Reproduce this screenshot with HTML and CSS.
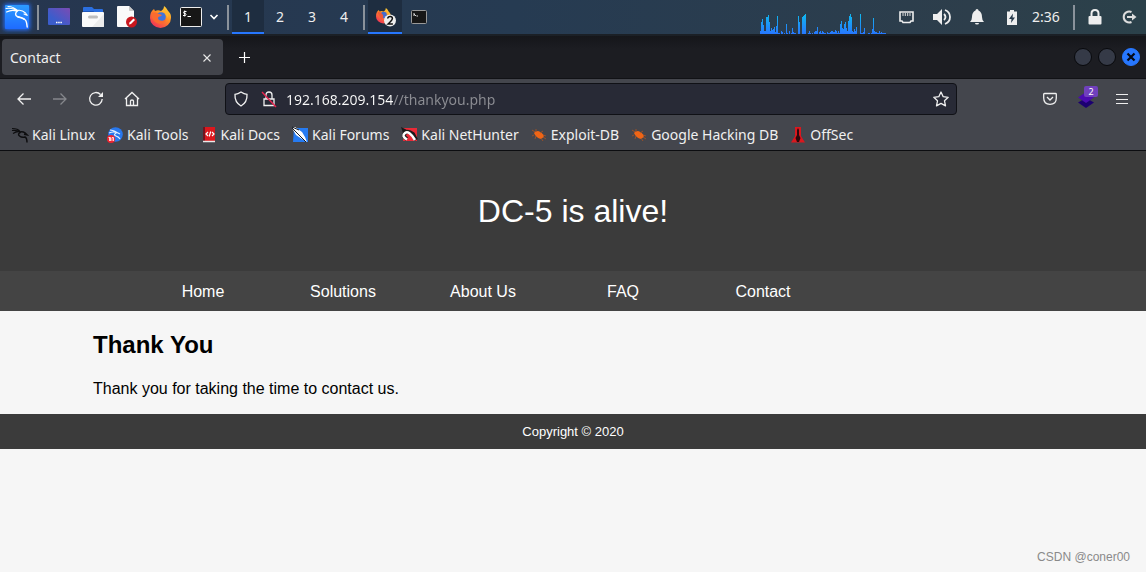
FILE: index.html
```html
<!DOCTYPE html>
<html lang="en">
<head>
<meta charset="utf-8">
<meta name="viewport" content="width=device-width, initial-scale=1">
<title>Contact</title>
<link rel="stylesheet" href="styles.css">
</head>
<body>
<div class="panel">
  <button class="cell" aria-label="Applications"><svg width="34" height="34" viewBox="0 0 34 34"><defs><linearGradient id="kg" x1="0" y1="0" x2="0" y2="1"><stop offset="0" stop-color="#2c9bff"/><stop offset="1" stop-color="#1e6bff"/></linearGradient><filter id="glow" x="-30%" y="-30%" width="160%" height="160%"><feGaussianBlur stdDeviation="2"/></filter></defs><rect x="4" y="4" width="26" height="26" rx="2" fill="#2470ff" filter="url(#glow)"/><rect x="5" y="5" width="24" height="24" rx="1" fill="url(#kg)"/><g fill="none" stroke="#fff" stroke-linecap="round"><path d="M8 6.500c4 .2 7 1.500 9.500 4M6 8.500c4-.5 8 .2 11 2M6.500 12c3-1.500 7-2 10-1" stroke-width="1.100"/><path d="M17 10.500c3-.8 6 0 8.500 2.500l2 2.500-3.500-1.500" stroke-width="1.100"/><path d="M18 10.500c-3 2-3.500 5 0 6.500 3 1 6.500 1 8 4 .9 2 1 4 1.200 6" stroke-width="1.400"/><path d="M24 19c-2-1.500-4-2-6-2.300" stroke-width="1.600"/></g></svg></button>
  <span class="sep"></span>
  <button class="cell" aria-label="Show desktop"><svg width="22" height="18" viewBox="0 0 22 18"><defs><linearGradient id="dg" x1="0" y1="1" x2="1" y2="0"><stop offset=".3" stop-color="#3b5dcc"/><stop offset="1" stop-color="#7b4bb3"/></linearGradient></defs><rect width="22" height="17" rx="1" fill="url(#dg)"/><path d="M8 14.500h1.500m.7 0h1.500m.7 0h1.500" stroke="#fff" stroke-width="1.500"/></svg></button>
  <button class="cell" aria-label="Files"><svg width="22" height="20" viewBox="0 0 22 20"><path d="M1 1q0-1 1-1h8l2 2h8q1 0 1 1v5H1z" fill="#2b6fe0"/><path d="M1 4h11l-1 2H1z" fill="#1e55b8"/><rect y="5" width="22" height="15" rx="1" fill="#fafafa"/><path d="M22 7v12q0 1-1 1H10z" fill="#ececec"/><rect x="6" y="8.500" width="10" height="3" rx="1.500" fill="#bdbdbd"/></svg></button>
  <button class="cell" aria-label="Text editor"><svg width="20" height="22" viewBox="0 0 20 22"><path d="M0 1q0-1 1-1h11l5 5v15q0 1-1 1H1q-1 0-1-1z" fill="#fafafa"/><path d="M12 0v4q0 1 1 1h4z" fill="#c9c9c9"/><circle cx="14.500" cy="16" r="5.500" fill="#c9171e"/><path d="m12 18.500.5-2 4-4 1.500 1.500-4 4z" fill="#fff"/></svg></button>
  <button class="cell" aria-label="Firefox"><svg width="22" height="22" viewBox="0 0 22 22"><defs><linearGradient id="ff" x1=".9" y1="0" x2=".2" y2="1"><stop offset="0" stop-color="#ffe03b"/><stop offset=".45" stop-color="#ff8d23"/><stop offset="1" stop-color="#f02c5c"/></linearGradient></defs><path id="fox" d="M14 0c3 2 3 4 5 6s2 4 2 6a10 9.500 0 0 1-21 0c0-4 1-7 4-9l1 2c2-1 4-1 6 0 2-1 3-3 3-5z" fill="url(#ff)"/><circle cx="11" cy="11" r="4.800" fill="#3f74dc"/><path d="M2 7c3-1 5 0 7 1l3 1c-1 2-4 1-4 3 0 3 5 4 8 1-1 4-5 6-9 4s-6-6-5-10z" fill="#fa6b30"/><path d="M10 7c2-2 5-2 6 2l2 3c1-5-2-7-4-9z" fill="#ffb52d"/></svg></button>
  <button class="cell terminal" aria-label="Terminal"><svg width="22" height="20" viewBox="0 0 22 20"><rect x=".5" y=".5" width="21" height="19" rx="1" fill="#171717" stroke="#eee"/><path d="M6.500 4.500H4q-1 1 0 2h1.500q1 1 0 2H3M4.700 3.500v6M7.500 9.500H11" fill="none" stroke="#fff"/></svg></button>
  <button class="cell more" aria-label="More terminals"><svg width="10" height="8" viewBox="0 0 10 8"><path d="m1.500 2 3.500 3.500L8.500 2" fill="none" stroke="#fff" stroke-width="1.600"/></svg></button>
  <span class="sep"></span>
  <button class="space current">1</button><button class="space">2</button><button class="space">3</button><button class="space">4</button>
  <span class="sep"></span>
  <button class="cell current" aria-label="Firefox windows"><svg width="16" height="22" viewBox="0 0 16 22"><g transform="translate(-1 2) scale(.7)"><use href="#fox"/><circle cx="11" cy="10" r="4.500" fill="#456bcb"/><path d="M2 6c5-1 7 3 8 4s0 5-2 7z" fill="#f05a35"/></g><circle cx="13" cy="14.500" r="6" fill="#eee"/><path d="M10.700 12.500q.3-2 2.500-2t2.200 2q0 1.500-4.300 5.500h4.800" fill="none" stroke="#111" stroke-width="1.500"/></svg></button>
  <button class="cell" aria-label="Terminal window"><svg width="16" height="14" viewBox="0 0 16 14"><rect x=".5" y=".5" width="15" height="13" rx="1" fill="#171717" stroke="#999"/><path d="M3 3v3m0-2 2 2m.5 0H7" fill="none" stroke="#ddd"/></svg></button>
  <svg class="graph" width="126" height="20" viewBox="0 0 126 20" shape-rendering="crispEdges"><defs><linearGradient id="cpu" gradientUnits="userSpaceOnUse" x1="0" y1="0" x2="0" y2="20"><stop offset="0" stop-color="#10b9ee"/><stop offset="1" stop-color="#2777ff"/></linearGradient></defs><path fill="url(#cpu)" d="M0 20V17h1V8h1V5h1V11h1V17h2V3h2V1h1V8h1V17h1V14h1V16h1V15h1V13h1V18h1V12h1V2h1V19h2V20h1V17h1V18h1V20h1V19h1V20h1V10h1V19h1V20h1V17h1V20h1V19h1V14h1V18h1V19h2V20h2V2h1V8h1V20h2V3h1V2h1V1h1V0h1V20h2V19h1V17h1V19h1V20h1V19h1V20h1V18h1V17h2V13h1V20h1V18h1V17h1V19h1V17h1V18h1V19h2V20h1V18h1V19h2V18h1V17h2V18h2V16h1V17h1V19h1V17h1V19h1V10h1V7h1V14h1V15h1V10h1V8h1V14h1V17h1V7h1V2h1V0h1V3h1V17h1V18h1V15h1V17h1V13h1V20h3V0h1V19h2V18h1V14h1V20h3V19h2V20h1V19h1V15h1V4h1V17h1V18h2V19h2V17h1V19h1V18h1V19h4V20z"/></svg>
  <button class="tray" aria-label="Network"><svg width="15" height="13" viewBox="0 0 15 13"><path d="M1 1h13v9h-2l-1 1.500H4L3 10H1z" fill="none" stroke="#eee" stroke-width="1.600"/><path d="M4 2v3m2.300-3v3m2.400-3v3M11 2v3" stroke="#ddd"/></svg></button>
  <button class="tray" aria-label="Volume"><svg width="18" height="18" viewBox="0 0 18 18"><path d="M0 6h4l5-5v16l-5-5H0z" fill="#eee"/><path d="M11 6q3 3 0 6M12 2q5 2 5 7t-5 7" fill="none" stroke="#eee" stroke-width="1.800"/></svg></button>
  <button class="tray" aria-label="Notifications"><svg width="14" height="16" viewBox="0 0 14 16"><path d="M7 0q1.500 0 1.500 1.500Q12 3 12 8q0 3 2 5H0q2-2 2-5 0-5 3.500-6.500Q5.500 0 7 0zM5 14h4q0 1.500-2 1.500T5 14z" fill="#eee"/></svg></button>
  <button class="tray" aria-label="Battery"><svg width="10" height="15" viewBox="0 0 10 15"><path d="M3 0h4v1.500h3V15H0V1.500h3z" fill="#eee"/><path d="M6 3.500 2 9h2.500L4 13l4-5.500H5.500z" fill="#293b4c"/></svg></button>
  <time class="clock">2:36</time>
  <span class="sep"></span>
  <button class="cell" aria-label="Lock screen"><svg width="14" height="16" viewBox="0 0 14 16"><rect x=".5" y="7" width="13" height="8.500" rx="1" fill="#eee"/><path d="M3.500 7V4.500q0-3.500 3.500-3.500t3.500 3.500V7" fill="none" stroke="#eee" stroke-width="2"/></svg></button>
  <button class="cell" aria-label="Log out"><svg width="16" height="14" viewBox="0 0 16 14"><path d="M10.500 2A5.500 5.500 0 1 0 10.500 12M6 7h7" fill="none" stroke="#ddd" stroke-width="2"/><path d="m11 3.500 4.500 3.500L11 10.500z" fill="#ddd"/></svg></button>
</div>

<div class="tabs">
  <div class="tab"><span>Contact</span><button class="icon-btn" aria-label="Close tab"><svg width="8" height="8" viewBox="0 0 8 8"><path d="m.5.5 7 7m0-7-7 7" stroke="#e8e8e8" stroke-width="1.100"/></svg></button></div>
  <button class="icon-btn new-tab" aria-label="New tab"><svg width="11" height="11" viewBox="0 0 11 11"><path d="M5.500 0v11M0 5.500h11" stroke="#fff" stroke-width="1.200"/></svg></button>
  <div class="window-buttons">
    <button class="win" aria-label="Minimize"></button><button class="win" aria-label="Maximize"></button><button class="win close" aria-label="Close"><svg width="8" height="8" viewBox="0 0 8 8"><path d="m.5.5 7 7m0-7-7 7" stroke="#050a18" stroke-width="2.200"/></svg></button>
  </div>
</div>

<div class="toolbar">
  <div class="history">
    <button class="nav-btn" aria-label="Back"><svg width="16" height="16" viewBox="0 0 16 16"><path d="M15 8H2m5.500-5.500L2 8l5.500 5.500" class="line"/></svg></button>
    <button class="nav-btn" disabled aria-label="Forward"><svg width="16" height="16" viewBox="0 0 16 16"><path d="M1 8h13M8.500 2.500 14 8l-5.500 5.500" class="line dim"/></svg></button>
    <button class="nav-btn" aria-label="Reload"><svg width="16" height="16" viewBox="0 0 16 16"><path d="M12.500 3.500A6.300 6.300 0 1 0 14.200 8" class="line"/><path d="M15 1v5h-5z" fill="#f0f0f0"/></svg></button>
    <button class="nav-btn" aria-label="Home"><svg width="16" height="16" viewBox="0 0 16 16"><path d="m1 8 7-6.500L15 8M2.500 7v7.500h11V7M6.500 14v-4q0-1 1.500-1t1.500 1v4" class="line"/></svg></button>
  </div>
  <div class="address">
    <svg width="16" height="16" viewBox="0 0 16 16"><path d="M8 1q3 2 6 2.300.5 8-6 11.700Q1.500 11.300 2 3.300 5 3 8 1z" class="line"/></svg>
    <svg width="16" height="16" viewBox="0 0 16 16"><path d="M3 8h10v6.500H3zM5 8V4q0-3 3-3t3 3v4" class="line"/><path d="m1 1 14 15" stroke="#e6234d" stroke-width="1.400"/></svg>
    <input class="url" type="text" value="192.168.209.154//thankyou.php" aria-label="Address" spellcheck="false">
    <button class="icon-btn" aria-label="Bookmark this page"><svg width="16" height="16" viewBox="0 0 16 16"><path d="m8 1 2.200 4.700 5 .6-3.700 3.500 1 5.100L8 12.400l-4.500 2.500 1-5.100L.8 6.300l5-.6z" class="line" stroke-linejoin="round"/></svg></button>
  </div>
  <div class="actions">
    <button class="action" aria-label="Save to Pocket"><svg width="14" height="14" viewBox="0 0 14 14"><path d="M1.500 1.500h11q.8 0 .8.800V6q0 6.300-6.300 6.300T.7 6V2.300q0-.8.800-.8zM4 5l3 3 3-3" class="line"/></svg></button>
    <button class="action" aria-label="Extension, 2 items"><svg width="16" height="17" viewBox="0 0 16 17"><path d="M0 11.500 8 7l8 4.500-8 5.500z" fill="#1c0070"/><path d="M0 6.500 8 1l8 5.500L8 12z" fill="#4b0bb0"/></svg><span class="badge">2</span></button>
    <button class="action" aria-label="Menu"><svg width="12" height="10" viewBox="0 0 12 10" shape-rendering="crispEdges"><path d="M0 .5h12M0 5h12M0 9.500h12" stroke="#eee"/></svg></button>
  </div>
</div>

<div class="bookmarks">
  <a href="#"><svg width="16" height="16" viewBox="0 0 16 16"><g fill="none" stroke="#0d0d0f"><path d="M0 1.500q6 0 8 3M0 3.500q5-.5 8 1.500M1 6.500q4-2.500 7-1.500" stroke-width="1.200"/><path d="M8 5q3-.5 5 .8l2 2-3-.6M9 5Q5 7 7.500 9t5.500 1q2 1 2 5.500" stroke-width="1.500"/></g></svg>Kali Linux</a>
  <a href="#"><svg width="16" height="16" viewBox="0 0 16 16"><circle cx="8.500" cy="7.500" r="7.300" fill="#2878ee"/><path d="M3 3q6 1 7 3M2 6q5-2 8 0M9 5l4 2M9 6q-3 2 0 3t4 3" fill="none" stroke="#e4efff" stroke-width="1.200"/><circle cx="4" cy="12" r="4" fill="#ee2430"/><path d="M1.500 10.500h2V14m-1-3.500V14M5 10.500h1.500V14M5 10.500V14" fill="none" stroke="#fff" stroke-width=".8"/></svg>Kali Tools</a>
  <a href="#"><svg width="16" height="16" viewBox="0 0 16 16"><path d="M2 1q0-1 1-1h11v15H2z" fill="#dc171d"/><path d="M2 0h2v14H2z" fill="#71151f"/><path d="M2 14.500h12" stroke="#eaeaea" stroke-width="1.500"/><path d="m7 5-2 2 2 2m4-4 2 2-2 2M9.700 4.500l-1.500 5" fill="none" stroke="#fff" stroke-width="1.200"/></svg>Kali Docs</a>
  <a href="#"><svg width="16" height="16" viewBox="0 0 16 16"><path d="M2 1h14v14H1z" fill="#267bf2"/><path d="M0 1 3 0l7 5 3 5 2 5-5-3-6-4z" fill="#fff"/><path d="M0 1 5 6l9 9M0 0l7 3" fill="none" stroke="#161b25"/></svg>Kali Forums</a>
  <a href="#"><svg width="16" height="16" viewBox="0 0 16 16"><path d="M2 1h14v13H2z" fill="#e92a37"/><path d="m0 0 6 3-4 3z" fill="#191919"/><path d="M6 12Q1 9 4 6t8 1l3 6" fill="none" stroke="#1b1b1b" stroke-width="4"/><path d="M6 12.500Q0 9 4 6t10 7" fill="none" stroke="#fff" stroke-width="2.500"/></svg>Kali NetHunter</a>
  <a href="#"><svg width="16" height="16" viewBox="0 0 16 16"><g id="bug"><path d="M3 6q1-2 4-2 4 1 6 5-1 2-3 3-5-1-7-6z" fill="#ef6516"/><path d="M4 5 1 3m4 2V2m4 4 3-2m0 4 3 1M3 8l-2 1m4 0-1 3m6-1 2 3m0-4 3 2" stroke="#b0531f" stroke-width=".8"/></g></svg>Exploit-DB</a>
  <a href="#"><svg width="16" height="16" viewBox="0 0 16 16"><use href="#bug"/></svg>Google Hacking DB</a>
  <a href="#"><svg width="16" height="16" viewBox="0 0 16 16"><path d="M5 0h6v9l4 6.500H1L5 9z" fill="#da171e"/><path d="M8 1l1 2v5l1.500 3L9 15H7l-1.500-4L7 8V3z" fill="#2d080b"/></svg>OffSec</a>
</div>

<main class="page">
  <header class="banner">DC-5 is alive!</header>
  <nav class="menu"><ul>
    <li><a href="#">Home</a></li><li><a href="#">Solutions</a></li><li><a href="#">About Us</a></li><li><a href="#">FAQ</a></li><li><a href="#">Contact</a></li>
  </ul></nav>
  <section class="content"><h2>Thank You</h2><p>Thank you for taking the time to contact us.</p></section>
  <footer class="footer">Copyright © 2020</footer>
</main>
<div class="watermark">CSDN @coner00</div>
</body>
</html>
```

FILE: styles.css
```css
* { box-sizing: border-box; }
body {
  margin: 0;
  min-height: 100vh;
  position: relative;
  background: #f6f6f6;
  font: 14px/20px "Noto Sans", sans-serif;
}
button {
  padding: 0;
  border: 0;
  background: none;
  color: inherit;
  font: inherit;
}
svg { display: block; flex: none; overflow: visible; }
a { color: inherit; text-decoration: none; }

.panel {
  display: flex;
  height: 36px;
  border-bottom: 2px solid #1b2026;
  background: linear-gradient(90deg, #26364f, #263b52 45%, #2d3e4b 85%, #2b414a);
  color: #eee;
}
.cell, .tray, .space {
  display: flex;
  flex: none;
  align-items: center;
  justify-content: center;
  width: 34px;
}
.tray { width: 35px; }
.terminal { width: 26px; }
.more { width: 20px; }
.space { width: 32px; }
.current { background: #1e2d40; box-shadow: inset 0 -2px #2777ff; }
.sep {
  flex: none;
  width: 2px;
  margin: 5px 3px 4px;
  background: #8a929b;
}
.graph { margin: 14px 3px 0 auto; }
.clock { width: 41px; padding-left: 3px; line-height: 34px; }

.tabs {
  display: flex;
  align-items: center;
  height: 43px;
  padding: 0 6px 0 2px;
  border-bottom: 1px solid #111216;
  background: linear-gradient(#15161a, #1c1d22 30%);
  color: #f0f0f0;
}
.tab {
  display: flex;
  align-items: center;
  justify-content: space-between;
  width: 221px;
  height: 36px;
  padding: 1px 12px 0 8px;
  border-radius: 4px;
  background: #42444b;
}
.new-tab { margin-left: 16px; }
.window-buttons { display: flex; gap: 6px; margin-left: auto; }
.win {
  display: flex;
  align-items: center;
  justify-content: center;
  width: 18px;
  height: 18px;
  border: 1px solid #08090c;
  border-radius: 50%;
  background: #353a47;
}
.win.close { border-color: #2777ff; background: #2777ff; }

.toolbar {
  display: flex;
  align-items: center;
  height: 40px;
  padding: 0 6px;
  background: #44464d;
  color: #f0f0f0;
}
.line { fill: none; stroke: #f0f0f0; stroke-width: 1.3; }
.dim { stroke: #85878c; }
.history { display: flex; flex: none; width: 219px; }
.nav-btn, .action {
  display: flex;
  align-items: center;
  justify-content: center;
  width: 36px;
  height: 32px;
}
.address {
  display: flex;
  flex: 1;
  align-items: center;
  gap: 12px;
  height: 32px;
  min-width: 200px;
  padding: 0 7px;
  border: 1px solid #101116;
  border-radius: 4px;
  background: #282a36;
}
.url {
  flex: 1;
  min-width: 0;
  margin-left: -3px;
  padding: 1px 0 0;
  border: 0;
  outline: 0;
  background: linear-gradient(90deg, #fafafa 107px, #8c8d93 107px);
  background-clip: text;
  -webkit-background-clip: text;
  -webkit-text-fill-color: transparent;
  caret-color: #fff;
  font: inherit;
}
.actions { display: flex; flex: none; margin-left: 75px; }
.action { position: relative; }
.badge {
  position: absolute;
  top: 3px;
  right: 6px;
  width: 14px;
  height: 11px;
  border-radius: 2px;
  background: #7040bd;
  color: #fff;
  font-size: 9px;
  line-height: 11px;
  text-align: center;
}

.bookmarks {
  display: flex;
  gap: 12px;
  height: 32px;
  padding: 0 12px;
  border-bottom: 1px solid #0c0d10;
  background: #44464d;
  color: #f0f0f0;
  white-space: nowrap;
}
.bookmarks a { display: flex; align-items: center; gap: 4px; }

.page { font: 16px/18px "Liberation Sans", Arial, sans-serif; }
.banner {
  background: #3b3b3b;
  color: #fff;
  font-size: 32px;
  line-height: 120px;
  text-align: center;
}
.menu { background: #444; color: #fff; }
.menu ul {
  display: flex;
  max-width: 960px;
  margin: 0 auto;
  padding: 1px 40px 0;
  list-style: none;
}
.menu li { width: 140px; line-height: 39px; text-align: center; }
.menu a { display: block; }
.content { max-width: 960px; margin: 0 auto; padding: 20px 0 16px; }
.content h2 { margin: 0 0 20px; font-size: 24px; line-height: 28px; }
.content p { margin: 0; line-height: 19px; }
.footer {
  background: #3b3b3b;
  color: #fff;
  font-size: 13px;
  line-height: 35px;
  text-align: center;
}
.watermark {
  position: absolute;
  right: 16px;
  bottom: 5px;
  color: #8a8a8a;
  font: 12px/20px "Liberation Sans", Arial, sans-serif;
}
```
